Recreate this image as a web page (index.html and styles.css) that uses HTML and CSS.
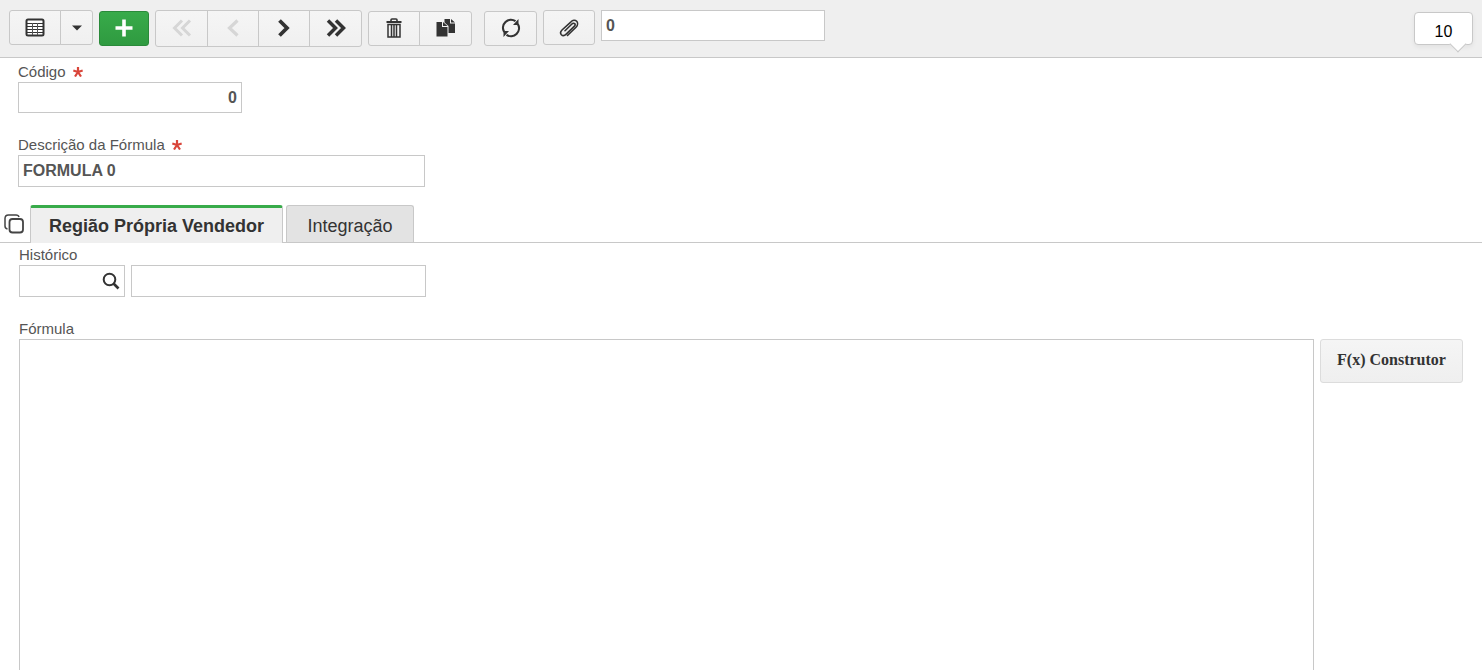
FILE: index.html
```html
<!DOCTYPE html>
<html lang="pt-BR">
  <head>
    <meta charset="utf-8">
    <title>Fórmula</title>
    <link rel="stylesheet" href="styles.css">
  </head>
  <body>
    <header class="toolbar">
      <div class="group">
        <button type="button" class="btn" aria-label="Grade">
          <svg width="20" height="20" viewBox="0 0 20 20"><rect x="1.500" y="1.500" width="17" height="16" rx="1.500" fill="#fff" stroke="#333" stroke-width="2"/><path d="M2 5.500h16M2 8.500h16M2 11.500h16M2 14.500h16" stroke="#333" stroke-width="1.200"/><path d="M7.500 5v12M12.500 5v12" stroke="#555"/></svg>
        </button>
        <button type="button" class="btn btn-caret" aria-label="Mais opções">
          <svg width="10" height="6" viewBox="0 0 10 6"><path d="M0 0.500h10L5 5.500z" fill="#333"/></svg>
        </button>
      </div>
      <button type="button" class="btn btn-add centered" aria-label="Adicionar">
        <svg width="18" height="18" viewBox="0 0 18 18"><path d="M9 0.500v17M0.500 9h17" stroke="#fff" stroke-width="3.600"/></svg>
      </button>
      <div class="group nav">
        <button type="button" class="btn" disabled aria-label="Primeiro">
          <svg width="20" height="18" viewBox="0 0 20 18"><path d="M10 1.500L2.500 9l7.500 7.500M18 1.500L10.500 9l7.500 7.500" fill="none" stroke="currentColor" stroke-width="3"/></svg>
        </button>
        <button type="button" class="btn" disabled aria-label="Anterior">
          <svg width="12" height="18" viewBox="0 0 12 18"><path d="M10.500 1.500L2.500 9l8 7.500" fill="none" stroke="currentColor" stroke-width="3.200"/></svg>
        </button>
        <button type="button" class="btn" aria-label="Próximo">
          <svg width="12" height="18" viewBox="0 0 12 18"><path d="M1.500 1.500L9 9l-7.500 7.500" fill="none" stroke="currentColor" stroke-width="3.800"/></svg>
        </button>
        <button type="button" class="btn" aria-label="Último">
          <svg width="20" height="18" viewBox="0 0 20 18"><path d="M2 1.500L9.500 9 2 16.500M10 1.500L17.500 9 10 16.500" fill="none" stroke="currentColor" stroke-width="3.500"/></svg>
        </button>
      </div>
      <div class="group centered">
        <button type="button" class="btn" aria-label="Excluir">
          <svg width="16" height="20" viewBox="0 0 16 20"><path d="M5 3V2q0-1 1-1h4q1 0 1 1v1" fill="none" stroke="#333" stroke-width="1.600"/><path d="M0.500 3h15v2h-15z" fill="#333"/><path d="M2 6.500h12v12.500H2zM5.500 7v12M8 7v12M10.500 7v12" fill="none" stroke="#333" stroke-width="1.500"/></svg>
        </button>
        <button type="button" class="btn" aria-label="Duplicar">
          <svg width="20" height="18" viewBox="0 0 20 18"><path d="M8.500 0H14v4.500h5V14h-6.500V7L8.500 3.500zM15 0l4 3.500h-4z" fill="#333"/><path d="M0.500 3H6v5h5.500v9.500h-11zM7 3l4.500 4H7z" fill="#333"/></svg>
        </button>
      </div>
      <button type="button" class="btn btn-refresh centered" aria-label="Atualizar">
        <svg width="20" height="20" viewBox="0 0 20 20"><path d="M3.200 14A8 8 0 0 1 14.500 3.200M16.800 6A8 8 0 0 1 5.500 16.800" fill="none" stroke="#333" stroke-width="2.200"/><path d="M17.500 1v6H12zM2.500 19v-6H8z" fill="#333"/></svg>
      </button>
      <button type="button" class="btn" aria-label="Anexos">
        <svg width="20" height="18" viewBox="0 0 20 18"><path d="M8.500 16.500l8.500-8.300c1.800-1.900 2-4.500.7-5.900-1.500-1.500-4-1.200-5.700.5L3 11c-1.600 1.600-1.700 3.500-.6 4.700 1.200 1.200 3.200 1 4.800-.5l8-7.800c1-1 1.100-2.100.5-2.800-.7-.7-1.900-.5-2.800.4L6 11.700" fill="none" stroke="#333" stroke-width="1.600" stroke-linecap="round"/></svg>
      </button>
      <input type="text" class="field field-code" value="0" aria-label="Pesquisar">
      <div class="counter">10</div>
    </header>

    <form class="page">
      <div class="main-fields">
        <div class="form-row">
          <label for="codigo">Código <svg class="required" width="10" height="10" viewBox="0 0 10 10"><path d="M5 5V0M5 5L0.300 3.500M5 5l4.700-1.500M5 5L2 9.500M5 5l3 4.500" stroke="#d9453a" stroke-width="2.200"/></svg></label>
          <input type="text" id="codigo" class="field field-code number" value="0">
        </div>
        <div class="form-row">
          <label for="descricao">Descrição da Fórmula <svg class="required" width="10" height="10" viewBox="0 0 10 10"><path d="M5 5V0M5 5L0.300 3.500M5 5l4.700-1.500M5 5L2 9.500M5 5l3 4.500" stroke="#d9453a" stroke-width="2.200"/></svg></label>
          <input type="text" id="descricao" class="field field-tall field-desc" value="FORMULA 0">
        </div>
      </div>

      <div class="tabs">
        <button type="button" class="tab-list" aria-label="Abas">
          <svg width="20" height="20" viewBox="0 0 20 20"><rect x="5.500" y="5" width="13.500" height="13.500" rx="3" fill="none" stroke="#444" stroke-width="1.800"/><path d="M3.500 15Q1 14.500 1 12V4.500Q1 1 4.500 1H12q2.500 0 3 2" fill="none" stroke="#444" stroke-width="1.500"/></svg>
        </button>
        <button type="button" class="tab active">Região Própria Vendedor</button>
        <button type="button" class="tab">Integração</button>
      </div>

      <div class="tab-content">
        <div class="form-row">
          <label for="historico">Histórico</label>
          <div class="lookup">
            <div class="lookup-code">
              <input type="text" id="historico">
              <button type="button" aria-label="Buscar histórico">
                <svg width="18" height="18" viewBox="0 0 18 18"><circle cx="7.500" cy="7.500" r="5.800" fill="none" stroke="#333" stroke-width="2"/><path d="M11.500 11.500l5 5" stroke="#333" stroke-width="2.600"/></svg>
              </button>
            </div>
            <input type="text" class="field field-tall field-name" aria-label="Nome do histórico">
          </div>
        </div>
        <div class="form-row">
          <label for="formula">Fórmula</label>
          <div class="formula">
            <textarea id="formula"></textarea>
            <button type="button" class="btn-builder">F(x) Construtor</button>
          </div>
        </div>
      </div>
    </form>
  </body>
</html>
```
FILE: styles.css
```css
* {
  box-sizing: border-box;
}
body {
  margin: 0;
  height: 100vh;
  overflow: hidden;
  font-family: "Liberation Sans", Arial, sans-serif;
  font-size: 15px;
  color: #555;
  background-color: #fff;
}
button, input, textarea {
  font-family: inherit;
  margin: 0;
}
button {
  cursor: pointer;
}
svg {
  display: block;
}

/* toolbar */
.toolbar {
  display: flex;
  align-items: flex-start;
  gap: 6px;
  padding: 10px 9px;
  background-color: #efefef;
  border-bottom: 1px solid #c8c8c8;
}
.centered {
  align-self: center;
}
.group {
  display: flex;
}
.btn {
  display: flex;
  align-items: center;
  justify-content: center;
  width: 52px;
  height: 35px;
  padding: 0;
  border: 1px solid #c8c8c8;
  border-radius: 3px;
  color: #333;
  background: linear-gradient(#f5f5f5, #f0f0f0);
}
.group .btn + .btn {
  margin-left: -1px;
  border-top-left-radius: 0;
  border-bottom-left-radius: 0;
}
.group .btn:not(:last-child) {
  border-top-right-radius: 0;
  border-bottom-right-radius: 0;
}
.nav .btn, .centered .btn, .btn.centered {
  padding-bottom: 2px;
}
.nav .btn {
  height: 37px;
}
.nav .btn:first-child, .nav .btn:last-child {
  width: 53px;
}
.group .btn:last-child:not(.btn-caret) {
  width: 53px;
}
.btn:disabled {
  color: #d6d6d6;
  cursor: default;
}
.btn-caret {
  width: 33px;
}
.btn-add {
  width: 50px;
  border-color: #2a8a3a;
  background: linear-gradient(#38ab4a, #2f9a40);
}
.btn-refresh {
  width: 53px;
  margin-left: 6px;
}
.counter {
  position: relative;
  width: 59px;
  height: 33px;
  margin-top: 2px;
  margin-left: auto;
  border: 1px solid #c8c8c8;
  border-radius: 4px;
  background-color: #fff;
  box-shadow: 0 2px 5px rgba(0, 0, 0, 0.06);
  font-size: 16px;
  line-height: 38px;
  text-align: center;
  color: #000;
}
.counter::after {
  content: "";
  position: absolute;
  right: 8px;
  bottom: -6px;
  width: 11px;
  height: 11px;
  border: solid #c8c8c8;
  border-width: 0 1px 1px 0;
  background-color: #fff;
  transform: rotate(45deg);
}

/* fields */
.field {
  display: block;
  height: 31px;
  padding: 0 4px;
  border: 1px solid #c8c8c8;
  background-color: #fff;
  font-size: 16px;
  font-weight: bold;
  color: #555;
}
.field-tall {
  height: 32px;
}
.field-code {
  width: 224px;
}
.field-desc {
  width: 407px;
}
.field-name {
  width: 295px;
}
.number {
  text-align: right;
}
.form-row {
  margin-bottom: 22px;
}
.form-row label {
  display: flex;
  align-items: center;
  gap: 7px;
  height: 20px;
  line-height: 18px;
  padding-bottom: 1px;
}
.main-fields {
  padding: 4px 18px 0;
}
.main-fields .form-row:last-child {
  margin-bottom: 18px;
}

/* tabs */
.tabs {
  display: flex;
  gap: 3px;
  height: 38px;
  border-bottom: 1px solid #c8c8c8;
}
.tab-list {
  width: 27px;
  padding: 0 0 0 4px;
  border: none;
  background: none;
}
.tab {
  min-width: 128px;
  height: 37px;
  padding: 4px 18px 0;
  border: 1px solid #c8c8c8;
  border-bottom: none;
  border-radius: 3px 3px 0 0;
  background-color: #e3e3e3;
  font-size: 18px;
  color: #333;
}
.tab.active {
  height: 38px;
  padding-top: 2px;
  border-top: 3px solid #38ab4a;
  background-color: #efefef;
  font-weight: bold;
}
.tab-content {
  padding: 2px 19px;
}
.lookup, .formula {
  display: flex;
  align-items: flex-start;
  gap: 6px;
}
.lookup-code {
  display: flex;
  width: 106px;
  height: 32px;
  border: 1px solid #c8c8c8;
}
.lookup-code input {
  flex: 1;
  min-width: 0;
  padding: 0 4px;
  border: none;
  font-size: 16px;
}
.lookup-code button {
  padding: 0 4px;
  border: none;
  background: none;
}
.formula textarea {
  flex: 1;
  height: 400px;
  padding: 4px;
  border: 1px solid #c8c8c8;
  resize: none;
  font-size: 16px;
}
.btn-builder {
  width: 143px;
  height: 44px;
  padding: 0 0 2px;
  border: 1px solid #dcdcdc;
  border-radius: 3px;
  background: linear-gradient(#f5f5f5, #efefef);
  font-family: "Liberation Serif", "Times New Roman", serif;
  font-size: 16px;
  font-weight: bold;
  color: #333;
}
```
